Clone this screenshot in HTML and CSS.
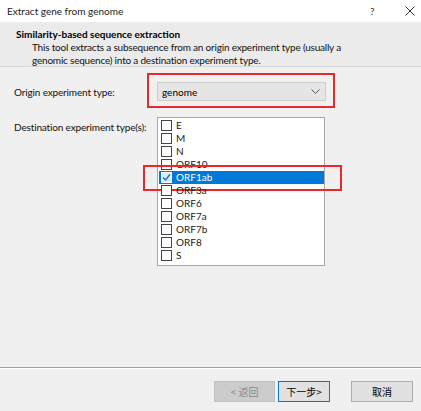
FILE: index.html
```html
<!DOCTYPE html>
<html lang="en">
<head>
  <meta charset="UTF-8">
  <title>Extract gene from genome</title>
  <link rel="stylesheet" href="styles.css">
</head>
<body>
<div class="window">
  <div class="titlebar">
    <span class="title">Extract gene from genome</span>
    <span class="tb-help">?</span>
    <span class="tb-close">
      <svg width="10" height="10" viewBox="0 0 10 10"><path d="M0.5 0.5 L9.5 9.5 M9.5 0.5 L0.5 9.5" stroke="#333" stroke-width="1" fill="none"/></svg>
    </span>
  </div>

  <div class="header">
    <div class="header-title">Similarity-based sequence extraction</div>
    <div class="header-desc">This tool extracts a subsequence from an origin experiment type (usually a<br>genomic sequence) into a destination experiment type.</div>
  </div>

  <div class="content">
    <div class="form-grid">
      <label class="field-label">Origin experiment type:</label>
      <div class="combo">
        <span class="combo-text">genome</span>
        <svg class="combo-arrow" width="9" height="5" viewBox="0 0 9 5"><path d="M0.5 0.5 L4.5 4.5 L8.5 0.5" stroke="#555" stroke-width="1" fill="none"/></svg>
        <div class="mark mark-combo"></div>
      </div>

      <label class="field-label">Destination experiment type(s):</label>
      <div class="listbox">
        <div class="item"><span class="check"></span>E</div>
        <div class="item"><span class="check"></span>M</div>
        <div class="item"><span class="check"></span>N</div>
        <div class="item"><span class="check"></span>ORF10</div>
        <div class="item selected">
          <span class="check checked">
            <svg width="9" height="9" viewBox="0 0 9 9"><path d="M1 4.5 L3.5 7 L8 1.5" stroke="#1f6fc5" stroke-width="1.4" fill="none"/></svg>
          </span>ORF1ab
          <div class="mark mark-item"></div>
        </div>
        <div class="item"><span class="check"></span>ORF3a</div>
        <div class="item"><span class="check"></span>ORF6</div>
        <div class="item"><span class="check"></span>ORF7a</div>
        <div class="item"><span class="check"></span>ORF7b</div>
        <div class="item"><span class="check"></span>ORF8</div>
        <div class="item"><span class="check"></span>S</div>
      </div>
    </div>
  </div>

  <div class="footer">
    <button class="btn btn-back" disabled>&lt; 返回</button>
    <button class="btn btn-next">下一步&gt;</button>
    <button class="btn btn-cancel">取消</button>
  </div>
</div>
</body>
</html>
```

FILE: styles.css
```css
body {
  margin: 0;
  font-family: Lato, "Noto Sans CJK SC", sans-serif;
  font-size: 10px;
  color: #000;
  background-color: #f0f0f0;
}
.window {
  width: 421px;
  height: 411px;
  display: flex;
  flex-direction: column;
  background-color: #f0f0f0;
}
.titlebar {
  height: 22px;
  background-color: #fff;
  display: flex;
  align-items: center;
  padding-left: 7px;
  color: #222;
}
.title {
  flex: 1;
}
.tb-help {
  width: 12px;
  margin-right: 23px;
  color: #333;
}
.tb-close {
  width: 10px;
  height: 10px;
  margin-right: 6px;
  display: flex;
}
.header {
  height: 38px;
  padding: 6px 0 0 16px;
  background-color: #ebebeb;
  border-bottom: 1px solid #d6d6d6;
  line-height: 13px;
}
.header-title {
  font-weight: bold;
}
.header-desc {
  padding-left: 16px;
  white-space: nowrap;
  letter-spacing: -0.2px;
  color: #111;
}
.content {
  flex: 1;
  padding: 15px 0 0 14px;
}
.form-grid {
  display: grid;
  grid-template-columns: 143px 169px;
  row-gap: 16px;
}
.field-label {
  display: flex;
  align-items: center;
  height: 19px;
  color: #111;
  letter-spacing: -0.15px;
}
.combo {
  position: relative;
  height: 17px;
  border: 1px solid #cdcdcd;
  background-color: #e5e5e5;
  display: flex;
  align-items: center;
  padding-left: 4px;
}
.combo-text {
  flex: 1;
}
.combo-arrow {
  margin-right: 5px;
}
.listbox {
  height: 146px;
  border: 1px solid #a8a8a8;
  background-color: #fff;
  padding-top: 1px;
  width: 166px;
}
.item {
  position: relative;
  height: 13px;
  line-height: 13px;
  display: flex;
  align-items: center;
  padding-left: 2px;
  margin-left: 1px;
  color: #222;
}
.item.selected {
  background-color: #0078d7;
  color: #fff;
}
.check {
  width: 9px;
  height: 9px;
  border: 1px solid #444;
  background-color: #fff;
  margin-right: 4px;
  display: flex;
  align-items: center;
  justify-content: center;
}
.check.checked {
  border-color: #fff;
  background-color: #dceaf7;
}
.mark {
  position: absolute;
  border: 2px solid #e8282b;
  pointer-events: none;
}
.mark-combo {
  left: -11px;
  right: -10px;
  top: -10px;
  bottom: -8px;
}
.mark-item {
  left: -16px;
  right: -18px;
  top: -6px;
  bottom: -7px;
}
.footer {
  height: 44px;
  box-sizing: border-box;
  border-top: 1px solid #a0a0a0;
  box-shadow: inset 0 1px 0 #fff;
  display: flex;
  align-items: flex-start;
  padding-top: 13px;
}
.btn {
  height: 21px;
  font-family: "Noto Sans CJK SC", sans-serif;
  font-size: 10px;
  background-color: #e1e1e1;
  border: 1px solid #adadad;
  padding: 0;
  color: #000;
}
.btn-back {
  width: 61px;
  margin-left: 214px;
  background-color: #cccccc;
  border-color: #bfbfbf;
  color: #8a8a8a;
}
.btn-next {
  width: 52px;
  margin-left: 3px;
  border-color: #0078d7;
}
.btn-cancel {
  width: 62px;
  margin-left: 21px;
}
```
